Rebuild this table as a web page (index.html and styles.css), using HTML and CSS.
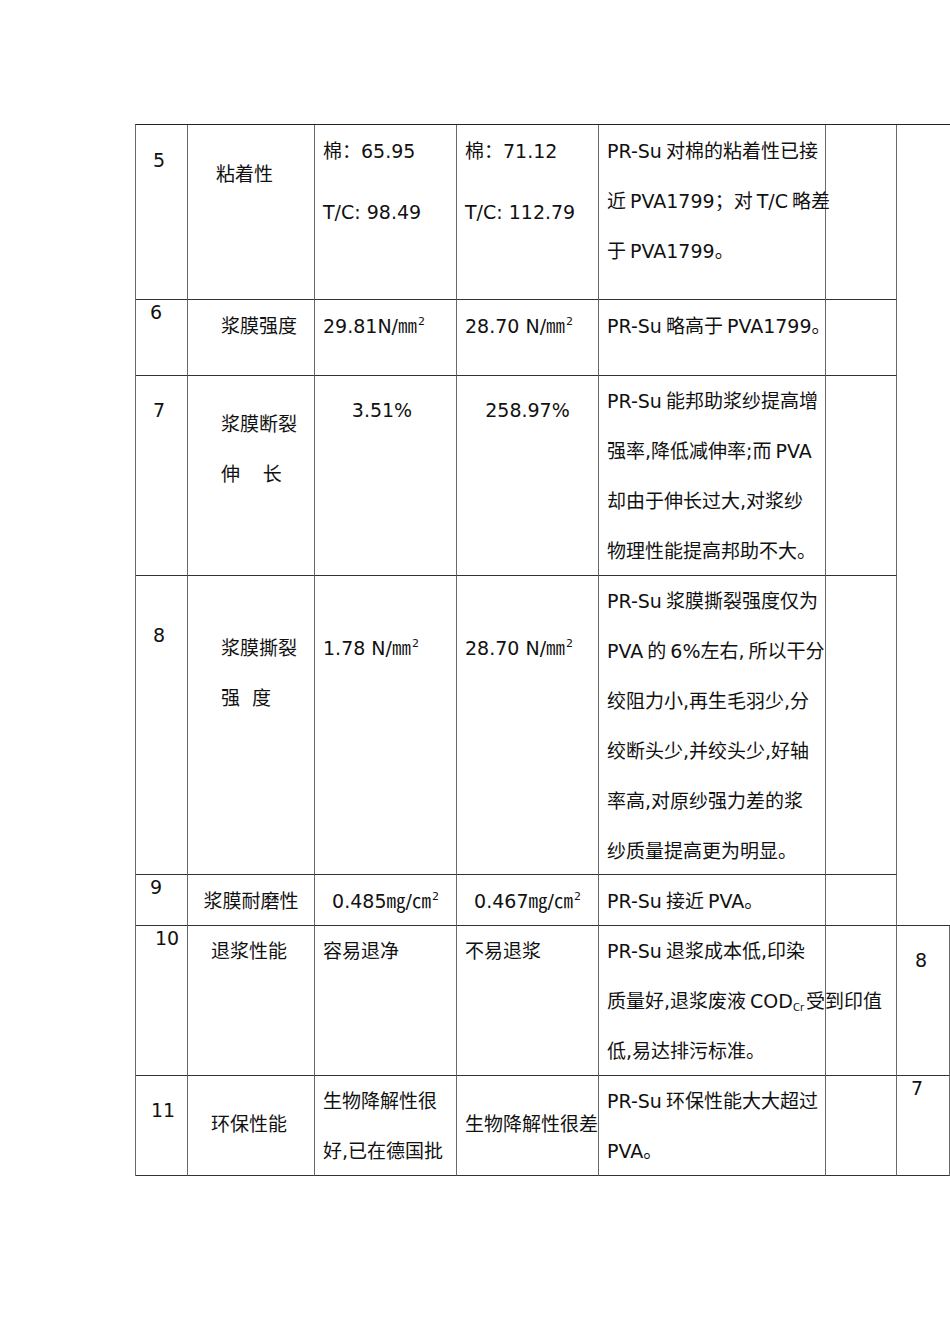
FILE: index.html
```html
<!DOCTYPE html>
<html lang="zh-CN">
<head>
<meta charset="utf-8">
<title>PR-Su 与 PVA 性能对比</title>
<link rel="stylesheet" href="styles.css">
</head>
<body>
<div class="page">
  <div class="sheet">
    <!-- row 5 -->
    <div class="cell num pt23">5</div>
    <div class="cell label ind28 pt24">粘着性</div>
    <div class="cell val pt1"><div>棉：65.95</div><div class="gap11">T/C: 98.49</div></div>
    <div class="cell val pt1"><div>棉：71.12</div><div class="gap11">T/C: 112.79</div></div>
    <div class="cell desc pt1">PR-Su 对棉的粘着性已接<br>近 PVA1799；对 T/C 略差<br>于 PVA1799。</div>
    <div class="cell"></div>
    <div class="cell side"></div>

    <!-- row 6 -->
    <div class="cell num tight pt0">6</div>
    <div class="cell label ind33 pt1">浆膜强度</div>
    <div class="cell val pt1">29.81N/㎜<span class="sup">2</span></div>
    <div class="cell val pt1">28.70 N/㎜<span class="sup">2</span></div>
    <div class="cell desc pt1">PR-Su 略高于 PVA1799。</div>
    <div class="cell"></div>

    <!-- row 7 -->
    <div class="cell num pt22">7</div>
    <div class="cell label ind33 pt23">浆膜断裂<br>伸　&thinsp;长</div>
    <div class="cell val center shiftl pt9">3.51%</div>
    <div class="cell val center pt9">258.97%</div>
    <div class="cell desc pt0">PR-Su 能邦助浆纱提高增<br>强率,降低减伸率;而 PVA<br>却由于伸长过大,对浆纱<br>物理性能提高邦助不大。</div>
    <div class="cell"></div>

    <!-- row 8 -->
    <div class="cell num pt47">8</div>
    <div class="cell label ind33 pt47">浆膜撕裂<br>强&nbsp; 度</div>
    <div class="cell val pt47">1.78 N/㎜<span class="sup">2</span></div>
    <div class="cell val pt47">28.70 N/㎜<span class="sup">2</span></div>
    <div class="cell desc pt0">PR-Su 浆膜撕裂强度仅为<br>PVA 的 6%左右, 所以干分<br>绞阻力小,再生毛羽少,分<br>绞断头少,并绞头少,好轴<br>率高,对原纱强力差的浆<br>纱质量提高更为明显。</div>
    <div class="cell"></div>

    <!-- row 9 -->
    <div class="cell num tight pt0">9</div>
    <div class="cell label center pt1">浆膜耐磨性</div>
    <div class="cell val center pt1">0.485㎎/㎝<span class="sup">2</span></div>
    <div class="cell val center pt1">0.467㎎/㎝<span class="sup">2</span></div>
    <div class="cell desc pt1">PR-Su 接近 PVA。</div>
    <div class="cell"></div>

    <!-- row 10 -->
    <div class="cell num wide pt0">10</div>
    <div class="cell label ind23 pt0">退浆性能</div>
    <div class="cell val pt0">容易退净</div>
    <div class="cell val pt0">不易退浆</div>
    <div class="cell desc pt0">PR-Su 退浆成本低,印染<br>质量好,退浆废液 COD<sub class="sub">Cr</sub>&#8202;受到印值<br>低,易达排污标准。</div>
    <div class="cell"></div>
    <div class="cell side boxed mark pt22">8</div>

    <!-- row 11 -->
    <div class="cell num mid pt22">11</div>
    <div class="cell label ind23 pt23">环保性能</div>
    <div class="cell val pt0">生物降解性很<br>好,已在德国批</div>
    <div class="cell val pt23">生物降解性很差</div>
    <div class="cell desc pt0">PR-Su 环保性能大大超过<br>PVA。</div>
    <div class="cell"></div>
    <div class="cell side boxed mark seven pt0">7</div>
  </div>
</div>
</body>
</html>
```

FILE: styles.css
```css
html, body {
  margin: 0;
  padding: 0;
  background: #ffffff;
}

.page {
  width: 950px;
  height: 1344px;
  overflow: hidden;
  box-sizing: border-box;
  padding: 124px 0 0 135px;
}

.sheet {
  display: grid;
  grid-template-columns: 52px 127px 142px 142px 227px 71px 53px;
  grid-template-rows: 175px 76px 200px 299px 51px 150px 100px;
  width: 815px;
  box-sizing: border-box;
  border-top: 1px solid #222222;
  border-left: 1px solid #6a6a6a;
  font-family: "DejaVu Sans", "Noto Sans CJK SC", sans-serif;
  font-size: 19px;
  color: #111111;
}

.cell {
  box-sizing: border-box;
  border-right: 1px solid #6a6a6a;
  border-bottom: 1px solid #333333;
  white-space: nowrap;
  line-height: 50px;
  min-width: 0;
}

.num {
  line-height: 24px;
  padding-left: 17px;
}
.num.tight { padding-left: 14px; }
.num.wide { padding-left: 19px; }
.num.mid { padding-left: 15px; }

.ind23 { padding-left: 23px; }
.ind28 { padding-left: 28px; }
.ind33 { padding-left: 33px; }

.val {
  padding-left: 8px;
}

.desc {
  padding-left: 8px;
  word-spacing: -2px;
}

.center {
  text-align: center;
  padding-left: 0;
}

.shiftl {
  padding-right: 7px;
}

.gap11 {
  margin-top: 11px;
}

.sup {
  font-size: 11px;
  vertical-align: 8px;
  line-height: 0;
  margin-left: 1px;
}

.side {
  grid-column: 7;
  grid-row: 1 / span 5;
  border-right: none;
}

.side.boxed {
  grid-row: auto;
  border-right: 1px solid #6a6a6a;
}

.mark {
  line-height: 24px;
  padding-left: 18px;
}
.mark.seven {
  padding-left: 14px;
}

.sub {
  font-size: 10px;
  vertical-align: -3px;
  line-height: 0;
}

.pt0 { padding-top: 0; }
.pt1 { padding-top: 1px; }
.pt9 { padding-top: 9px; }
.pt22 { padding-top: 22px; }
.pt23 { padding-top: 23px; }
.pt24 { padding-top: 24px; }
.pt47 { padding-top: 47px; }
```
